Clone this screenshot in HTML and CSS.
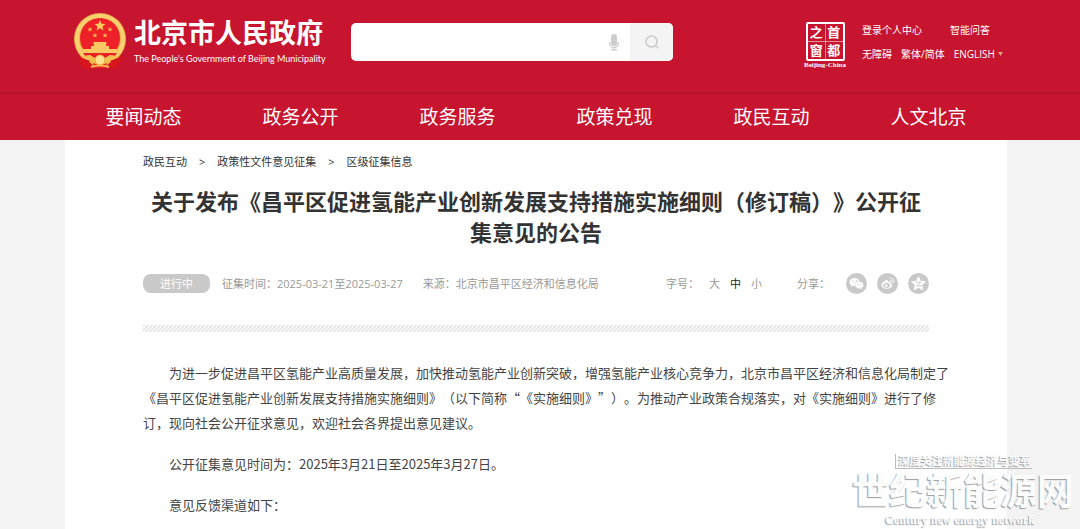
FILE: index.html
```html
<!DOCTYPE html>
<html lang="zh-CN">
<head>
<meta charset="utf-8">
<meta name="viewport" content="width=device-width, initial-scale=1">
<title>北京市人民政府</title>
<link rel="stylesheet" href="styles.css">
</head>
<body>
<header class="site-header">
  <div class="container masthead">
    <a class="brand" href="#">
      <svg class="emblem" viewBox="0 0 54 58" aria-hidden="true">
        <path d="M7 40Q4 47 8 54q4 3 9 3l5-3h10l5 3q5 0 9-3 4-7 1-14z" fill="#d81620"/>
        <circle cx="27" cy="27" r="26" fill="#e9b04a"/>
        <circle cx="27" cy="27" r="23" fill="none" stroke="#f9d070" stroke-width="4"/>
        <circle cx="27" cy="26" r="20" fill="#ee2129"/>
        <path d="M27 8l1.500 3.700 4 .3-3 2.500 1 4-3.500-2.200-3.500 2.200 1-4-3-2.500 4-.3z" fill="#ffc95c"/>
        <g fill="#f9b64f">
          <path id="star" d="M17 15l.7 1.600 1.800.1-1.400 1.100.5 1.800-1.600-1-1.600 1 .5-1.800-1.400-1.100 1.800-.1z"/>
          <use href="#star" x="20"/><use href="#star" x="5" y="6"/><use href="#star" x="15" y="6"/>
        </g>
        <path d="M21 30h12l1 2h-14zM21 32h12v2h3v3H18v-3h3zM10 37h34v4H10z" fill="#fbc864"/>
        <path d="M10 41h34l-4 6H14z" fill="#e9202a"/>
        <path d="M9 44l8-1 5 3h10l5-3 8 1-6 4q-4 3-6 7H21q-2-4-6-7z" fill="#f5be4e"/>
        <path d="M7 45l10 4-4 8-5-3zM47 45l-10 4 4 8 5-3z" fill="#d81620"/>
        <path d="M20 51q7 3 14 0l-1 5H21z" fill="#ee2129"/>
        <circle cx="27" cy="48" r="5" fill="#ffe08e" stroke="#e5a640"/>
        <path d="M18 55q9-3 18 0" fill="none" stroke="#f5be4e" stroke-width="2"/>
      </svg>
      <span class="brand-text">
        <span class="brand-name">北京市人民政府</span>
        <span class="brand-en">The People's Government of Beijing Municipality</span>
      </span>
    </a>
    <form class="search">
      <input class="search-input" type="text" aria-label="搜索">
      <button class="voice" type="button" aria-label="语音输入">
        <svg width="10" height="17" viewBox="0 0 10 17"><rect x="2" y="0" width="6" height="12" rx="3" fill="#ccc"/><path d="M.7 8v1.500a4.300 4 0 0 0 8.600 0V8M5 13.500v2M2 15.800h6" fill="none" stroke="#ccc" stroke-width="1.300"/></svg>
      </button>
      <button class="search-button" type="submit" aria-label="搜索">
        <svg width="14" height="14" viewBox="0 0 14 14"><circle cx="6.500" cy="6.500" r="5.500" fill="none" stroke="#ccc" stroke-width="1.600"/><path d="M10.500 10.500l3 2.500" stroke="#ccc" stroke-width="1.600"/></svg>
      </button>
    </form>
    <div class="utility">
      <a class="seal" href="#">
        <span class="seal-grid"><span>之</span><span>首</span><span>窗</span><span>都</span></span>
        <span class="seal-en">Beijing-China</span>
      </a>
      <div class="quick">
        <div class="quick-row quick-top"><a href="#">登录个人中心</a><a href="#">智能问答</a></div>
        <div class="quick-row"><a href="#">无障碍</a><a href="#">繁体/简体</a><a class="lang" href="#">ENGLISH<svg width="5" height="4" viewBox="0 0 5 4"><path d="M0 0h5L2.500 4z" fill="#e3a37b"/></svg></a></div>
      </div>
    </div>
  </div>
  <nav class="nav">
    <div class="container nav-list">
      <a href="#">要闻动态</a><a href="#">政务公开</a><a href="#">政务服务</a><a href="#">政策兑现</a><a href="#">政民互动</a><a href="#">人文北京</a>
    </div>
  </nav>
</header>
<div class="shell">
<main class="container page">
  <div class="crumbs"><a href="#">政民互动</a><span>&gt;</span><a href="#">政策性文件意见征集</a><span>&gt;</span><a href="#">区级征集信息</a></div>
  <h1 class="title">关于发布《昌平区促进氢能产业创新发展支持措施实施细则（修订稿）》公开征集意见的公告</h1>
  <div class="meta">
    <span class="status">进行中</span>
    <span class="period">征集时间：2025-03-21至2025-03-27</span>
    <span class="source">来源：北京市昌平区经济和信息化局</span>
    <div class="sizes"><span>字号：</span><button type="button">大</button><button class="active" type="button">中</button><button type="button">小</button></div>
    <div class="share">
      <span class="share-label">分享：</span>
      <a href="#" aria-label="微信"><svg viewBox="0 0 21 21"><circle cx="10.500" cy="10.500" r="10.500" fill="#c9c9c9"/><path d="M8.500 5C5.500 5 3.500 6.700 3.500 9c0 1.300.7 2.300 1.800 3l-.5 1.800 2-1 2 .2C8.300 10 10.300 7.900 13.300 7.900 12.800 6.100 10.800 5 8.500 5z" fill="#fff"/><path d="M13.300 8.600c-2.400 0-4.200 1.500-4.200 3.400s1.800 3.400 4.200 3.400l1.400-.2 1.600 1-.4-1.600c1-.6 1.600-1.500 1.600-2.600 0-1.900-1.800-3.400-4.200-3.400z" fill="#fff"/><g fill="#c9c9c9"><circle cx="7" cy="8" r=".7"/><circle cx="10.300" cy="7.800" r=".7"/><circle cx="12" cy="11.300" r=".6"/><circle cx="14.800" cy="11.300" r=".6"/></g></svg></a>
      <a href="#" aria-label="微博"><svg viewBox="0 0 21 21"><circle cx="10.500" cy="10.500" r="10.500" fill="#c9c9c9"/><path d="M9.500 7c-2.500.8-5 3.400-5 5.500 0 2 2.400 3.300 5.200 3.300 3.300 0 5.600-1.800 5.600-3.500 0-1-.7-1.600-1.600-1.900.5-1.600-.6-2.100-2.600-1.400.4-1.400-.2-2.200-1.600-2z" fill="#fff"/><ellipse cx="9.500" cy="12.500" rx="3.500" ry="2.500" fill="#c9c9c9" transform="rotate(-10 9.500 12.500)"/><circle cx="9" cy="12.800" r="1.600" fill="#fff"/><circle cx="8.800" cy="12.900" r=".6" fill="#c9c9c9"/><path d="M12.800 5.300c2.800-.7 4.800 1.500 3.900 4.300M13.200 7.300c1.300-.3 2.100.6 1.700 1.800" fill="none" stroke="#fff" stroke-linecap="round"/></svg></a>
      <a href="#" aria-label="QQ空间"><svg viewBox="0 0 21 21"><circle cx="10.500" cy="10.500" r="10.500" fill="#c9c9c9"/><path d="M10.500 3.500l2.100 4.600 5 .6-3.700 3.300 1 5-4.400-2.500L6.100 17l1-5L3.400 8.700l5-.6z" fill="#fff" stroke="#fff" stroke-linejoin="round" stroke-width=".6"/><path d="M7.800 9.300q3-.7 5.300 0l-4.500 3.400q2.500.7 5.300 0" fill="none" stroke="#c9c9c9"/></svg></a>
    </div>
  </div>
  <div class="divider"></div>
  <article class="content">
    <p>为进一步促进昌平区氢能产业高质量发展，加快推动氢能产业创新突破，增强氢能产业核心竞争力，北京市昌平区经济和信息化局制定了《昌平区促进氢能产业创新发展支持措施实施细则》（以下简称“《实施细则》”）。为推动产业政策合规落实，对《实施细则》进行了修订，现向社会公开征求意见，欢迎社会各界提出意见建议。</p>
    <p>公开征集意见时间为：2025年3月21日至2025年3月27日。</p>
    <p>意见反馈渠道如下：</p>
  </article>
</main>
</div>
<div class="watermark">
  <span class="wm-tag">深度关注新能源经济与变革</span>
  <span class="wm-name">世纪新能源网</span>
  <span class="wm-en">Century new energy network</span>
</div>
</body>
</html>
```
FILE: styles.css
```css
* { box-sizing: border-box; }
body {
  margin: 0;
  background: #f3f3f3;
  color: #333;
  font-family: "Open Sans", "Noto Sans CJK SC", sans-serif;
  font-size: 11px;
  text-spacing-trim: space-all;
}
a { color: inherit; text-decoration: none; }
button { border: 0; padding: 0; background: none; color: inherit; font: inherit; cursor: pointer; }
svg { display: block; }

.container { width: 100%; max-width: 942px; margin: 0 auto; }
.site-header, .shell { padding-right: 8px; }
.site-header { background: #c7142f; color: #fff; }
.masthead { display: flex; align-items: flex-start; height: 92px; padding-left: 8px; }

.brand { display: flex; gap: 7px; width: 278px; padding-top: 12px; }
.emblem { width: 54px; height: 58px; flex: none; }
.brand-text { display: flex; flex-direction: column; padding-top: 5px; white-space: nowrap; }
.brand-name { font-size: 27px; line-height: 32px; font-weight: 700; }
.brand-en { font-family: Lato, sans-serif; font-size: 9px; line-height: 14px; padding-top: 3px; }

.search { display: flex; width: 322px; height: 38px; margin-top: 23px; border-radius: 5px; background: #fff; overflow: hidden; }
.search-input { flex: 1; min-width: 0; border: 0; padding: 0 12px; background: none; font: inherit; outline: 0; }
.voice { width: 32px; display: grid; place-items: center; }
.search-button { width: 43px; display: grid; place-items: center; background: #f4f4f4; }

.utility { display: flex; gap: 15px; margin-left: auto; padding: 22px 6px 0 0; }
.seal { display: flex; flex-direction: column; align-items: center; width: 44px; }
.seal-grid { display: grid; grid-template-columns: 1fr 1fr; width: 39px; height: 39px; border: 2px solid #fff; border-radius: 2px; background: linear-gradient(#e58d99, #e58d99) center / 1px 100% no-repeat, linear-gradient(#e58d99, #e58d99) center / 100% 1px no-repeat; }
.seal-grid span { font-size: 13px; line-height: 17px; font-weight: 700; text-align: center; height: 17px; }
.seal-en { font: 700 7px/8px "Liberation Serif", serif; white-space: nowrap; }
.quick { width: 139px; font-size: 10px; line-height: 16px; white-space: nowrap; }
.quick-row { display: flex; gap: 9px; }
.quick-top { gap: 28px; margin-bottom: 8px; }
.lang { display: flex; align-items: center; gap: 3px; }

.nav { border-top: 2px solid #b5122b; margin-right: -8px; padding-right: 8px; }
.nav-list { display: grid; grid-template-columns: repeat(6, 1fr); }
.nav-list a { font-size: 19px; line-height: 46px; text-align: center; }

.page { background: #fff; min-height: calc(100vh - 140px); padding: 14px 0 0 78px; }
.crumbs { display: flex; gap: 12px; line-height: 16px; }
.title { margin: 16px 78px 0 0; font-size: 22px; line-height: 31px; font-weight: 700; text-align: center; }

.meta { display: flex; align-items: center; height: 22px; margin: 24px 78px 0 0; color: #999; white-space: nowrap; }
.status { width: 67px; line-height: 19px; border-radius: 8px; background: #c9c9c9; color: #fff; text-align: center; }
.period { margin-left: 12px; }
.source { margin-left: 20px; }
.sizes { display: flex; gap: 10px; margin-left: auto; }
.sizes .active { color: #222; }
.share { display: flex; align-items: center; gap: 10px; margin-left: 35px; }
.share-label { margin-right: 6px; }
.share svg { width: 21px; height: 21px; }

.divider { height: 7px; margin: 31px 78px 0 0; background: linear-gradient(135deg, #e4e4e4 25%, #fafafa 25% 50%, #e4e4e4 50% 75%, #fafafa 75%) 0 0 / 4px 4px; }

.content { padding: 28px 52px 0 0; font-family: "Noto Sans CJK SC", sans-serif; font-size: 13px; line-height: 25px; color: #444; }
.content p { margin: 0 0 16px; text-indent: 2em; }

.watermark { position: absolute; right: 6px; bottom: 2px; display: flex; flex-direction: column; align-items: center; color: #fcfcfc; text-shadow: -1px 1px 1px #999; font-weight: 700; white-space: nowrap; pointer-events: none; }
.wm-tag { font-size: 11px; line-height: 14px; padding: 0 1px 0 3px; border-left: 1px solid #bbb; border-bottom: 1px solid #bbb; }
.wm-name { font-size: 37px; line-height: 44px; }
.wm-en { font: 700 12px/14px "Liberation Serif", serif; margin-right: 6px; }
```
